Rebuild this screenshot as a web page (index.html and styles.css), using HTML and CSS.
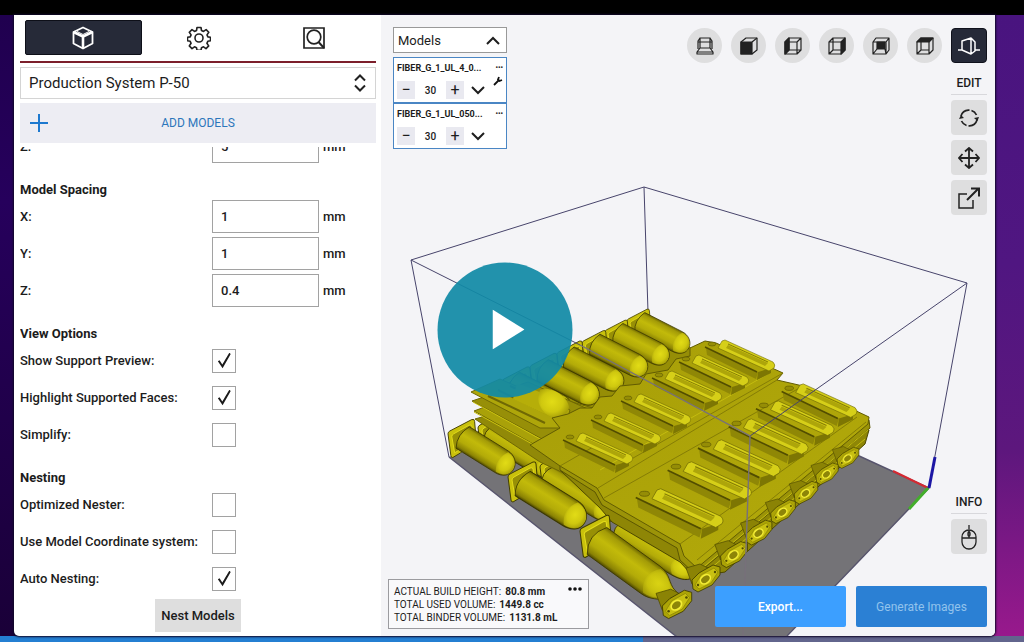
FILE: index.html
```html
<!DOCTYPE html>
<html lang="en">
<head>
<meta charset="utf-8">
<title>Production System P-50</title>
<meta name="viewport" content="width=device-width, initial-scale=1">
<link rel="stylesheet" href="styles.css">
</head>
<body>
<div class="player">
  <div class="stage">
    <main class="app">
      <section class="sidebar">
        <nav class="tabs">
          <button class="tab tab-active" aria-label="Models"><svg width="22" height="24" viewBox="0 0 22 24" fill="none" stroke="#fff" stroke-width="1.800" stroke-linejoin="round"><path d="M11 1.500 20.500 6V17.500L11 22.500 1.500 17.500V6Z"/><path d="M1.500 6 11 10.500 20.500 6M11 10.500V22.500" stroke-width="2.600"/><path d="M5 5.500 11 8.500 17 5.500" stroke-width="1"/></svg></button>
          <button class="tab" aria-label="Settings"><svg width="24" height="24" viewBox="0 0 24 24" fill="none" stroke="#222" stroke-width="1.600" stroke-linejoin="round"><circle cx="12" cy="12" r="4"/><path d="M10 1.500h4l.5 3 2 .9 2.600-1.800 2.700 2.700-1.800 2.600.9 2 2.600.4v3.500l-2.700.5-.9 2 1.800 2.600-2.700 2.700-2.500-1.800-2 .9-.5 2.500h-4l-.5-2.500-2-.9-2.500 1.800-2.700-2.700 1.800-2.600-.9-2-2.700-.5v-3.500l2.700-.4.9-2-1.800-2.600 2.700-2.700 2.500 1.800 2-.9z"/></svg></button>
          <button class="tab" aria-label="Inspect"><svg width="24" height="24" viewBox="0 0 24 24" fill="none" stroke="#222" stroke-width="1.700"><path d="M2 2h20v20H2z"/><circle cx="12" cy="11" r="6.800"/><path d="m16.500 16 5.500 6" stroke-width="2"/></svg></button>
        </nav>
        <div class="printer">
          <select class="printer-select" aria-label="Printer"><option>Production System P-50</option></select>
          <svg class="printer-arrows" width="12" height="18" viewBox="0 0 12 18" fill="none" stroke="#222" stroke-width="2"><path d="m1 6.500 5-5 5 5M1 11.500l5 5 5-5"/></svg>
        </div>
        <button class="add"><svg width="20" height="20" viewBox="0 0 20 20" stroke="#1d79cf" stroke-width="2"><path d="M10 1v18M1 10h18"/></svg><span>ADD MODELS</span></button>
        <form class="settings">
          <div class="row"><label for="part-z">Z:</label><input class="field" id="part-z" value="5"><span>mm</span></div>
          <h2>Model Spacing</h2>
          <div class="rows">
            <div class="row"><label for="sx">X:</label><input class="field" id="sx" value="1"><span>mm</span></div>
            <div class="row"><label for="sy">Y:</label><input class="field" id="sy" value="1"><span>mm</span></div>
            <div class="row"><label for="sz">Z:</label><input class="field" id="sz" value="0.4"><span>mm</span></div>
          </div>
          <h2>View Options</h2>
          <div class="rows">
            <div class="row"><label for="support">Show Support Preview:</label><input class="check" type="checkbox" id="support" checked></div>
            <div class="row"><label for="faces">Highlight Supported Faces:</label><input class="check" type="checkbox" id="faces" checked></div>
            <div class="row"><label for="simplify">Simplify:</label><input class="check" type="checkbox" id="simplify"></div>
          </div>
          <h2>Nesting</h2>
          <div class="rows">
            <div class="row"><label for="opt">Optimized Nester:</label><input class="check" type="checkbox" id="opt"></div>
            <div class="row"><label for="coord">Use Model Coordinate system:</label><input class="check" type="checkbox" id="coord"></div>
            <div class="row"><label for="auto">Auto Nesting:</label><input class="check" type="checkbox" id="auto" checked></div>
            <button class="nest" type="button">Nest Models</button>
          </div>
        </form>
      </section>

      <section class="viewport">
        <svg class="scene" viewBox="381 15 614 621" preserveAspectRatio="xMidYMid slice" aria-label="Build volume">
          <defs>
            <linearGradient id="tube" x1="0" y1="0" x2="0" y2="1">
              <stop offset="0" stop-color="#6d6700"/><stop offset=".12" stop-color="#a39b07"/><stop offset=".4" stop-color="#c2ba0a"/><stop offset=".68" stop-color="#b3ab08"/><stop offset=".9" stop-color="#8a8204"/><stop offset="1" stop-color="#4d4800"/>
            </linearGradient>
            <linearGradient id="deck" x1="0" y1="0" x2="1" y2="1">
              <stop offset="0" stop-color="#a79e08"/><stop offset="1" stop-color="#b3aa0a"/>
            </linearGradient>
            <radialGradient id="dome" cx=".45" cy=".45" r=".6">
              <stop offset="0" stop-color="#e2dc16"/><stop offset=".6" stop-color="#cfc80f"/><stop offset="1" stop-color="#a59d08"/>
            </radialGradient>
            <g id="plate" stroke="#423e00" stroke-width="1" stroke-linejoin="round">
              <path d="M0 4Q0 2 2 1L25-11Q28-12 28-9L30 14 5 29Q3 29 3 27Z" fill="#c9c10c"/>
              <path d="M4 7Q4 5 6 4L22-5Q25-6 25-4L27 12 7 24Z" fill="#989006" stroke="#e4dc1a"/>
            </g>
            <g id="tank">
              <path d="M0-11H60C70-11 79-6 79 1 79 8 71 12 60 12H0Q-9 1 0-11Z" fill="url(#tube)" stroke="#3b3700" stroke-width=".8"/>
              <path d="M61-10C71-10 78-5 78 1 78 7 71 11 61 11Q50 1 61-10Z" fill="url(#dome)"/>
            </g>
            <g id="neck">
              <path d="M0-17H70C84-17 88-8 98-6L108-5V7L98 8C88 10 84 17 70 17H0Q-13 0 0-17Z" fill="url(#tube)" stroke="#3b3700" stroke-width=".8"/>
              <path d="M72-15C84-15 88-7 97-5V6C88 8 84 15 72 15Q58 0 72-15Z" fill="url(#dome)" opacity=".75"/>
            </g>
            <g id="flange" stroke-linejoin="round">
              <path d="M-20-12-6-16 6-10-2 6-14 4Z" fill="#8b8305" stroke="#4b4600" stroke-width=".7"/>
              <path d="M-14 0-7-7 7-15 14-13 14-5 6 5-8 12-13 9Z" fill="#aca406" stroke="#3b3700" stroke-width=".8"/>
              <path d="M-11 5-5-5 8-12 12-8 5 3-7 9Z" fill="#c9c112" stroke="#8a8205" stroke-width=".7"/>
              <ellipse cx="0" cy="-1" rx="5.500" ry="4" transform="rotate(-38)" fill="#8d8508" stroke="#f3ec36" stroke-width="1.600"/>
              <circle cx="9" cy="-8" r="1.200" fill="#524d00"/><circle cx="-8" cy="5" r="1.200" fill="#524d00"/>
            </g>
            <g id="tray">
              <path d="M-16 7-15 14 34 38 36 31Z" fill="#8f8706"/>
              <path d="M-17 6 35 31" stroke="#524d00" stroke-width="1.500"/>
              <path d="M36 31 35 39 49 32V27Z" fill="#7d7603"/>
              <path d="M0 0 3-1 51 21Q54 24 52 27L47 30-4 7Z" fill="#d6cf18" stroke="#6f6904" stroke-width=".6"/>
              <path d="M6 4 46 22 43 25 4 7Z" fill="#ada50a"/>
              <path d="M6 3 46 21" stroke="#857d04" stroke-width="1"/>
              <ellipse cx="-10" cy="3" rx="4" ry="2" fill="#958d06" stroke="#605a02" stroke-width=".6"/>
            </g>
          </defs>
          <path d="M449 457 676 636H787L929 488 857 455 750 410 560 420Z" fill="#747377"/>
          <path d="M449 457 677 637M787 636 929 488 857 455" fill="none" stroke="#57546c" stroke-width="1.400"/>
          <path d="M644 187 648 312" stroke="#47446b"/>

          <path d="M505 385 640 322 700 352 665 380 560 430Z" fill="#968e06"/>
          <g>
            <use href="#plate" transform="translate(627 318) scale(.8)"/><use href="#tank" transform="translate(640 322) rotate(27) scale(.7 .96)"/>
            <use href="#plate" transform="translate(605 329) scale(.8)"/><use href="#tank" transform="translate(618 333) rotate(27) scale(.72 .98)"/>
            <use href="#plate" transform="translate(582 340) scale(.85)"/><use href="#tank" transform="translate(595 344) rotate(27) scale(.74 1)"/>
            <use href="#plate" transform="translate(557 351) scale(.9)"/><use href="#tank" transform="translate(569 357) rotate(27) scale(.77 1.020)"/>
            <use href="#plate" transform="translate(530 364) scale(.96)"/><use href="#tank" transform="translate(543 370) rotate(27) scale(.79 1.060)"/>
            <use href="#plate" transform="translate(502 378)"/><use href="#tank" transform="translate(514 383) rotate(27) scale(.81 1.100)"/>
          </g>

          <use href="#plate" transform="translate(478 424)"/><use href="#tank" transform="translate(490 434) rotate(30)"/>
          <use href="#plate" transform="translate(540 463)"/><use href="#tank" transform="translate(548 476) rotate(31)"/>
          <use href="#tank" transform="translate(620 530) rotate(31) scale(1.100 1)"/>

          <g stroke="#6f6804" stroke-width="1">
            <path d="M475 419 540 462 600 490 610 430 540 400Z" fill="#918908"/>
            <path d="M474 411 544 450 600 440 600 410 530 390Z" fill="#a9a109"/>
            <path d="M472 401 542 439 590 430 590 410 528 382Z" fill="#978f08"/>
            <path d="M471 392 500 379 570 410 565 428 540 428Z" fill="#aea60a"/>
            <path d="M488 396 545 423M498 390 552 416M510 386 560 408" stroke-width="2"/>
            <path d="M473 402 542 440M474 412 545 451" stroke="#cbc310"/>
          </g>
          <g transform="translate(547 400)"><path d="M-30-17 0-5 16 10 4 17-34-1Z" fill="#b6ae09"/><path d="M-7-10C5-14 20-4 22 7 21 16 12 18 4 17-6 12-12 1-7-10Z" fill="url(#dome)"/></g>

          <path d="M560 470 600 508 612 522 680 562 694 577 725 572 865 444 869 430Z" fill="#8e8606" stroke="#4d4800"/>
          <path d="M869 420 870 428 696 575 680 560 677 548 602 505 595 492 560 470 560 460Z" fill="#9b9308" stroke="#5c5602"/>
          <path d="M530 445 560 428 552 418 568 414 580 408 592 408 600 397 612 396 620 386 640 384 646 374 668 370 676 359 690 356 690 348 705 341 716 343 783 373 777 380 803 386 869 417 868 424 697 568 684 556 680 544 604 500 597 488 560 466Z" fill="url(#deck)" stroke="#625c02"/>
          <path d="M783 373 612 470M777 380 598 488M803 386 604 498M560 466 600 443M680 544 857 417M697 560 866 422" fill="none" stroke="#857d06"/>
          <path d="M768 374 600 470M700 570 868 430M704 574 865 439" fill="none" stroke="#c4bc10"/>

          <use href="#tray" transform="translate(722 341)"/>
          <use href="#tray" transform="translate(696 356)"/>
          <use href="#tray" transform="translate(669 372)"/>
          <use href="#tray" transform="translate(638 395)"/>
          <use href="#tray" transform="translate(608 414)"/>
          <use href="#tray" transform="translate(580 434)"/>
          <use href="#tray" transform="translate(800 385) scale(1.080)"/>
          <use href="#tray" transform="translate(775 402) scale(1.120)"/>
          <use href="#tray" transform="translate(748 420) scale(1.140)"/>
          <use href="#tray" transform="translate(718 441) scale(1.180)"/>
          <use href="#tray" transform="translate(688 463) scale(1.200)"/>
          <use href="#tray" transform="translate(657 490) scale(1.250)"/>

          <use href="#plate" transform="translate(448 430) scale(.95)"/><use href="#tank" transform="translate(463 437) rotate(32) scale(.76 1.100)"/>
          <use href="#plate" transform="translate(508 473)"/><use href="#tank" transform="translate(523 483) rotate(32) scale(.93 1.250)"/>

          <use href="#flange" transform="translate(848 459) scale(.78)"/>
          <use href="#flange" transform="translate(827 475) scale(.8)"/>
          <use href="#flange" transform="translate(806 494) scale(.84)"/>
          <use href="#flange" transform="translate(783 513) scale(.88)"/>
          <use href="#flange" transform="translate(759 534) scale(.92)"/>
          <use href="#flange" transform="translate(734 556) scale(.96)"/>
          <use href="#flange" transform="translate(706 580)"/>
          <use href="#plate" transform="translate(580 527) scale(1.050)"/><use href="#neck" transform="translate(597 541) rotate(36) scale(.94 .98)"/>
          <use href="#flange" transform="translate(677 606) scale(1.050)"/>

          <path d="M449 457 411 260 644 187 967 283 929 488M411 260 580 345M750 436 967 283" fill="none" stroke="#47446b"/>
          <path d="M580 345 750 436 743 636" fill="none" stroke="#77707a" stroke-width="1.400"/>
          <g stroke-width="3"><path d="M893 471 928 488" stroke="#d52931" stroke-width="2"/><path d="M928 488 909 509" stroke="#43ae2b"/><path d="M929 488 935 457" stroke="#1c16a4"/></g>
        </svg>

        <div class="upper">
          <aside class="models">
            <button class="models-head">Models<svg width="14" height="9" viewBox="0 0 14 9" fill="none" stroke="#1e1e1e" stroke-width="2"><path d="m1 8 6-6 6 6"/></svg></button>
            <div class="models-list">
              <article class="model">
                <div class="model-name"><span>FIBER_G_1_UL_4_0...</span><button aria-label="More">•••</button></div>
                <div class="counter"><button aria-label="Less">−</button><input aria-label="Copies" value="30"><button aria-label="Add">+</button>
                  <svg width="14" height="9" viewBox="0 0 14 9" fill="none" stroke="#1e1e1e" stroke-width="2"><path d="m1 1 6 6 6-6"/></svg></div>
                <svg class="wrench" width="10" height="10" viewBox="0 0 10 10" fill="none" stroke="#111" stroke-width="1.800"><path d="m1 9 5-5"/><path d="M6 1 5 3.500 6.500 5 9 4"/></svg>
              </article>
              <article class="model">
                <div class="model-name"><span>FIBER_G_1_UL_050...</span><button aria-label="More">•••</button></div>
                <div class="counter"><button aria-label="Less">−</button><input aria-label="Copies" value="30"><button aria-label="Add">+</button>
                  <svg width="14" height="9" viewBox="0 0 14 9" fill="none" stroke="#1e1e1e" stroke-width="2"><path d="m1 1 6 6 6-6"/></svg></div>
              </article>
            </div>
          </aside>
          <div class="views">
            <button aria-label="Bottom view"><svg viewBox="0 0 18 18"><path d="M4 1h10v10H4zM4 1 2 4v8M14 1l2 3v8M2 5h14M4 11l-3 4v2h16v-2l-3-4M1 15h16"/></svg></button>
            <button aria-label="Front view"><svg viewBox="0 0 18 18"><path d="M1 5 6 1H17V13L12 17H1Z"/><path d="M12 5 17 1"/><path class="solid" d="M1 5h11v12H1z"/></svg></button>
            <button aria-label="Left view"><svg viewBox="0 0 18 18"><path d="M1 5 5 1H17V13L13 17H1ZM5 1V13H17M5 5H13V17M13 5 17 1M1 17 5 13"/><path class="solid" d="M1 5l4-4v12l-4 4z"/></svg></button>
            <button aria-label="Right view"><svg viewBox="0 0 18 18"><path d="M1 5 5 1H17V13L13 17H1ZM1 5H13M5 1V13H13M1 17 5 13"/><path class="solid" d="M13 5l4-4v12l-4 4z"/></svg></button>
            <button aria-label="Back view"><svg viewBox="0 0 18 18"><path d="M1 5 4 1H17V13L14 17H1ZM1 5H14V17M14 5 17 1M1 17 5 12M14 17 13 12"/><path class="solid" d="M5 5h8v7H5z"/></svg></button>
            <button aria-label="Top view"><svg viewBox="0 0 18 18"><path d="M1 5 5 1H17V13L13 17H1ZM5 5V13H13M13 5V17M1 17 5 13"/><path class="solid" d="M1 5l4-4h12l-4 4z"/></svg></button>
          </div>
          <div class="tools">
            <div class="tool-group">
              <button class="tool tool-dark" aria-label="Perspective"><svg width="22" height="20" viewBox="0 0 22 20" fill="none" stroke="#fff" stroke-width="1.500" stroke-linejoin="round"><path d="M4 5 13 2 17 6V15L13 18 4 14ZM13 2V18M0 14H4M17 14H22"/></svg></button>
              <h3>EDIT</h3>
              <button class="tool" aria-label="Rotate"><svg width="22" height="22" viewBox="0 0 22 22" fill="none" stroke="#222" stroke-width="1.700"><path d="M3 9A8.300 8.300 0 0 1 18.500 8M19 13A8.300 8.300 0 0 1 3.500 14" stroke-dasharray="11 2 20"/><path d="m1 12 2-4 3 3zM16 11l3.500 3 1.500-4z" fill="#222" stroke="none"/></svg></button>
              <button class="tool" aria-label="Move"><svg width="22" height="22" viewBox="0 0 22 22" fill="none" stroke="#222" stroke-width="1.800"><path d="M11 1v20M1 11h20M7 4.500 11 1l4 3.500M7 17.500l4 3.500 4-3.500M4.500 7 1 11l3.500 4M17.500 7l3.500 4-3.500 4"/></svg></button>
              <button class="tool" aria-label="Scale"><svg width="22" height="22" viewBox="0 0 22 22" fill="none" stroke="#222" stroke-width="1.500"><path d="M9 7H1v14h14v-8"/><path d="M9 13 20 2M13 1.500h8v8" stroke-width="2"/></svg></button>
            </div>
            <div class="tool-group">
              <h3>INFO</h3>
              <button class="tool" aria-label="Mouse controls"><svg width="16" height="26" viewBox="0 0 16 26" fill="none" stroke="#222" stroke-width="1.300"><rect x="1" y="6" width="14" height="19" rx="7"/><path d="M1 14h14M8 1v4M8 6v8"/><rect x="7" y="8" width="2" height="4" rx="1"/></svg></button>
            </div>
          </div>
        </div>

        <div class="lower">
          <div class="stats">
            <dl>
              <div><dt>ACTUAL BUILD HEIGHT:</dt><dd>80.8 mm</dd></div>
              <div><dt>TOTAL USED VOLUME:</dt><dd>1449.8 cc</dd></div>
              <div><dt>TOTAL BINDER VOLUME:</dt><dd>1131.8 mL</dd></div>
            </dl>
            <button aria-label="More statistics"><svg width="14" height="4" viewBox="0 0 14 4" fill="#111"><circle cx="2" cy="2" r="1.800"/><circle cx="7" cy="2" r="1.800"/><circle cx="12" cy="2" r="1.800"/></svg></button>
          </div>
          <div class="actions">
            <button class="export">Export...</button>
            <button class="generate">Generate Images</button>
          </div>
        </div>
      </section>
    </main>
    <button class="play" aria-label="Play"><svg width="32" height="40" viewBox="0 0 32 40"><path d="M0 0 32 20 0 40Z" fill="#fff"/></svg></button>
  </div>
  <div class="progress"><div class="progress-done" style="width:62.8%"></div></div>
</div>
</body>
</html>
```
FILE: styles.css
```css
* { box-sizing: border-box; }
body {
  margin: 0;
  background: #000;
  color: #1c1c1c;
  font-family: Roboto, "Liberation Sans", sans-serif;
  font-size: 13px;
}
button, input, select { font: inherit; color: inherit; margin: 0; }
button { border: 0; padding: 0; background: none; cursor: pointer; }
svg { display: block; }

.player {
  min-height: 100vh;
  padding-top: 15px;
  display: flex;
  flex-direction: column;
}
.stage {
  position: relative;
  flex: 1;
  display: flex;
  padding: 0 29px 0 14px;
  background:
    linear-gradient(#20004f, #26005c 30%, #1a0038) left / 14px 100% no-repeat,
    linear-gradient(#49147f, #501681 40%, #5d177d 70%, #98198c) right / 40px 100% no-repeat,
    #1a0038;
}
.app {
  flex: 1;
  display: flex;
  background: #fff;
  border-radius: 0 0 5px 5px;
  overflow: hidden;
  box-shadow: 0 0 2px 1px #100828;
}

/* Sidebar */
.sidebar {
  flex: 0 0 367px;
  display: flex;
  flex-direction: column;
  padding: 5px 5px 0 6px;
  height: calc(100vh - 21px);
}
.tabs {
  display: flex;
  padding: 0 5px 6px;
  border-bottom: 2px solid #7c1f2b;
}
.tab {
  flex: 1;
  height: 35px;
  display: grid;
  place-items: center;
}
.tab-active { background: #262a38; border: 1px solid #0d0f18; border-radius: 2px; }
.printer { position: relative; margin: 4px 0; }
.printer-select {
  display: block;
  width: 100%;
  height: 32px;
  padding: 0 30px 0 8px;
  appearance: none;
  border: 1px solid #d4d4d4;
  border-radius: 0;
  background: #fff;
  font-size: 15px;
}
.printer-arrows { position: absolute; right: 10px; top: 7px; pointer-events: none; }
.add {
  display: grid;
  grid-template-columns: 20px 1fr 20px;
  align-items: center;
  height: 40px;
  flex: none;
  padding: 0 9px;
  background: #ededf3;
  color: #2c76bb;
  font-size: 12px;
}
.settings {
  flex: 1;
  min-height: 0;
  margin-top: 4px;
  padding-bottom: 4px;
  display: flex;
  flex-direction: column;
  justify-content: flex-end;
  overflow: hidden;
  font-weight: 500;
}
.settings > * { flex: none; }
h2 { margin: 17px 0 0; font-size: 13px; line-height: 20px; font-weight: 700; }
.rows { display: grid; gap: 4px; }
.row {
  display: grid;
  grid-template-columns: 192px 107px 1fr;
  align-items: center;
  height: 33px;
}
.row span { padding-left: 4px; }
.field {
  width: 100%;
  height: 33px;
  padding: 0 8px;
  border: 1px solid #a2a2a2;
  background: #fff;
}
.check {
  appearance: none;
  width: 24px;
  height: 24px;
  border: 1px solid #a2a2a2;
  background: #fff;
  display: grid;
  place-items: center;
}
.check:checked::before {
  content: "";
  width: 14px;
  height: 16px;
  background: #1b1b1b;
  clip-path: polygon(6% 54%, 18% 49%, 38% 75%, 88% 2%, 98% 9%, 40% 98%);
}
.nest {
  justify-self: center;
  height: 33px;
  padding: 0 6px;
  background: #dedede;
}

/* Viewport */
.viewport {
  position: relative;
  flex: 1;
  min-width: 0;
  display: flex;
  flex-direction: column;
  gap: 25px;
  padding: 12px 8px 7px 7px;
  background: #f4f4f7;
}
.scene { position: absolute; inset: 0; width: 100%; height: 100%; }
.upper { position: relative; flex: 1; display: flex; align-items: flex-start; }
.models { width: 114px; margin-left: 5px; }
.models-head {
  width: 100%;
  height: 26px;
  display: flex;
  align-items: center;
  justify-content: space-between;
  padding: 0 6px 0 4px;
  border: 1px solid #999;
  background: #fff;
}
.models-list { margin-top: 4px; display: grid; }
.model {
  position: relative;
  height: 46px;
  padding: 3px 3px 2px;
  border: 1px solid #4a86c4;
  background: #fff;
}
.model-name {
  display: flex;
  justify-content: space-between;
  font-size: 9px;
  line-height: 14px;
  font-weight: 700;
  white-space: nowrap;
}
.model-name button { font-size: 7px; }
.counter { display: flex; align-items: center; margin-top: 6px; }
.counter button { width: 18px; height: 18px; background: #e9e9f0; font-size: 16px; line-height: 16px; }
.counter input { width: 31px; height: 18px; padding: 0; border: 0; text-align: center; font-size: 10px; font-weight: 500; }
.counter svg { margin-left: 7px; }
.wrench { position: absolute; right: 3px; top: 18px; }

.views { display: flex; gap: 9px; margin-left: auto; padding-top: 1px; }
.views button {
  width: 35px;
  height: 35px;
  border-radius: 50%;
  background: #dededf;
  display: grid;
  place-items: center;
}
.views svg { width: 18px; height: 18px; fill: none; stroke: #222; stroke-width: 1.200; stroke-linejoin: round; }
.views .solid { fill: #222; }
.tools {
  align-self: stretch;
  width: 36px;
  margin-left: 9px;
  padding-top: 1px;
  display: flex;
  flex-direction: column;
  justify-content: space-between;
}
.tool-group { display: grid; gap: 5px; }
.tool {
  width: 36px;
  height: 35px;
  border-radius: 4px;
  background: #dededf;
  display: grid;
  place-items: center;
}
.tool-dark { background: #262a38; border: 1px solid #10121c; }
h3 {
  margin: 0;
  padding-top: 4px;
  border-bottom: 1px solid #d8d8dc;
  font-size: 12px;
  line-height: 22px;
  font-weight: 500;
  text-align: center;
}
.lower { position: relative; display: flex; align-items: flex-start; justify-content: space-between; }
.stats {
  width: 201px;
  display: flex;
  justify-content: space-between;
  align-items: flex-start;
  padding: 4px 6px 3px 5px;
  border: 1px solid #9b9b9f;
  background: #f9f9fb;
}
.stats dl { margin: 0; font-size: 10px; line-height: 13px; padding: 1px 0; }
.stats dl div { display: flex; gap: 4px; white-space: nowrap; }
.stats dd { margin: 0; font-weight: 700; }
.stats button { padding-top: 3px; }
.actions { display: flex; gap: 10px; padding-top: 7px; }
.actions button { width: 131px; height: 41px; border-radius: 2px; font-size: 12px; }
.actions .export { background: #3c9fff; color: #fff; font-weight: 500; }
.actions .generate { background: #2b80d4; color: #92c3ec; }

/* Video controls */
.play {
  position: absolute;
  left: calc(50% - 7px);
  top: calc(50% + 4px);
  width: 135px;
  height: 135px;
  transform: translate(-50%, -50%);
  border-radius: 50%;
  background: rgba(17, 138, 166, .93);
  display: grid;
  place-items: center;
  padding-left: 7px;
}
.progress { height: 6px; background: #62658d; }
.progress-done { height: 100%; background: #247fd2; }
```
